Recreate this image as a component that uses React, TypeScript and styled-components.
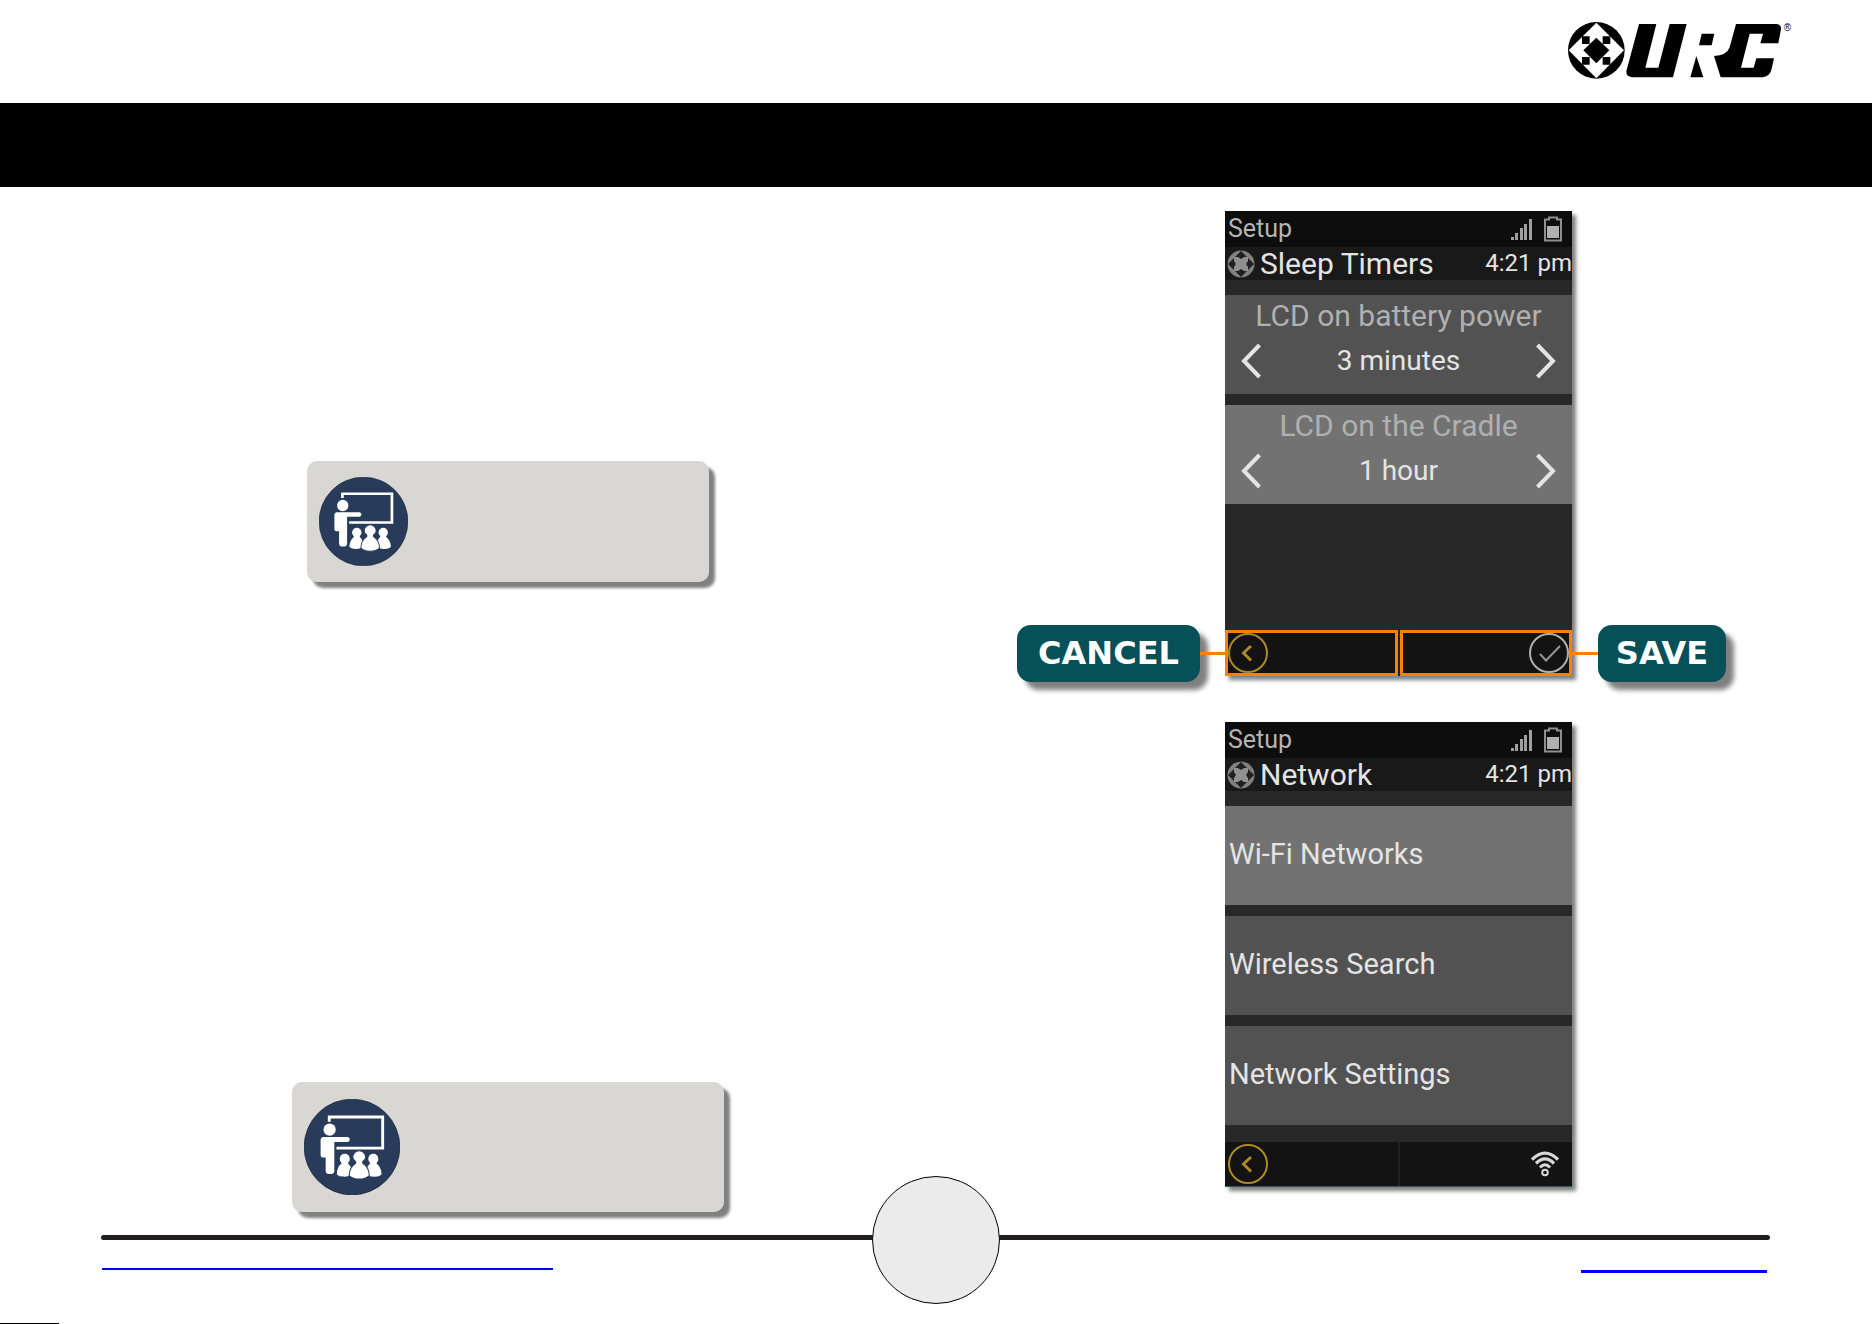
import React from "react";
import styled, { createGlobalStyle } from "styled-components";

const GlobalStyle = createGlobalStyle`
  *, *::before, *::after { box-sizing: border-box; }
  body { margin: 0; background: #fff; }
  button { margin: 0; padding: 0; border: 0; background: none; font: inherit; color: inherit; cursor: pointer; }
  svg { display: block; flex: none; }
`;

const ORANGE = "#ff8000";

const Page = styled.div`
  display: flex;
  flex-direction: column;
  min-height: 100vh;
  overflow-x: hidden;
  font-family: Roboto, "Liberation Sans", sans-serif;
`;

const Header = styled.header`
  display: flex;
  justify-content: flex-end;
  padding: 20px 80px 23px;
`;

const Banner = styled.div`
  height: 84px;
  background: #000;
`;

const Main = styled.main`
  display: grid;
  grid-template-columns: 1017fr 855fr;
  padding-bottom: 23px;
`;

const Notes = styled.section`
  display: flex;
  flex-direction: column;
  align-items: center;
  gap: 500px;
  padding: 274px 2px 0 0;
`;

const Note = styled.aside<{ $large?: boolean }>`
  display: flex;
  align-items: center;
  width: ${(p) => (p.$large ? 432 : 402)}px;
  height: ${(p) => (p.$large ? 130 : 121)}px;
  padding-left: 12px;
  border-radius: 10px;
  background: #d8d7d3;
  box-shadow: 6px 6px 3px #808080;
`;

const Figures = styled.section`
  display: flex;
  flex-direction: column;
  gap: 46px;
  padding-top: 24px;
`;

const Figure = styled.div`
  display: grid;
  grid-template-columns: 208px 347px 154px;
  align-items: end;
`;

const Callout = styled.div`
  display: flex;
  align-items: center;
  margin-bottom: -6px;
`;

const Tag = styled.span<{ $wide?: boolean }>`
  width: ${(p) => (p.$wide ? 183 : 128)}px;
  height: 57px;
  border-radius: 14px;
  background: #065058;
  box-shadow: 8px 8px 5px #808080;
  color: #fff;
  font: bold 32px/57px "DejaVu Sans", sans-serif;
  text-align: center;
`;

const Connector = styled.span`
  flex: 1;
  height: 3px;
  background: ${ORANGE};
`;

const Phone = styled.div`
  grid-column: 2;
  display: flex;
  flex-direction: column;
  height: 465px;
  background: #282828;
  box-shadow: 4px 4px 4px rgba(0, 0, 0, 0.5);
  color: #e4e4e4;
`;

const StatusBar = styled.div`
  display: flex;
  align-items: center;
  gap: 12px;
  height: 36px;
  padding: 0 10px 0 3px;
  background: #0d0d0d;
  color: #b4b4b4;
  font-size: 25px;
  line-height: 36px;
`;

const StatusText = styled.span`
  margin-right: auto;
`;

const TitleBar = styled.div`
  display: flex;
  align-items: center;
  gap: 5px;
  height: 33px;
  padding-left: 2px;
  background: #191919;
`;

const Title = styled.h2`
  flex: 1;
  margin: 0;
  font-size: 30px;
  font-weight: 400;
  line-height: 33px;
`;

const Clock = styled.time`
  font-size: 24px;
  line-height: 33px;
`;

const List = styled.div`
  display: flex;
  flex: 1;
  flex-direction: column;
  gap: 11px;
  padding-top: 15px;
`;

const Setting = styled.div<{ $active?: boolean }>`
  height: 99px;
  background: ${(p) => (p.$active ? "#727272" : "#525252")};
  text-align: center;
`;

const SettingName = styled.div`
  color: #b0b0b0;
  font-size: 30px;
  line-height: 42px;
`;

const SettingRow = styled.div`
  display: flex;
  align-items: center;
  justify-content: space-between;
  padding: 0 16px;
  font-size: 28px;
  line-height: 48px;
`;

const MenuItem = styled.button<{ $active?: boolean }>`
  height: 99px;
  padding: 0 4px 3px;
  background: ${(p) => (p.$active ? "#727272" : "#525252")};
  font-size: 29px;
  text-align: left;
`;

const SoftKeys = styled.div<{ $marked?: boolean }>`
  display: grid;
  grid-template-columns: 1fr 1fr;
  gap: 2px;
  height: ${(p) => (p.$marked ? 46 : 45)}px;
  border-bottom: ${(p) => (p.$marked ? "0" : "1px solid #2a5a70")};
  background: #222;
`;

const SoftKey = styled.button<{ $marked?: boolean; $right?: boolean; $inset?: number }>`
  display: flex;
  align-items: center;
  justify-content: ${(p) => (p.$right ? "flex-end" : "flex-start")};
  padding: 0 ${(p) => p.$inset ?? 0}px;
  border: ${(p) => (p.$marked ? `3px solid ${ORANGE}` : "0")};
  background: #131313;
`;

const Footer = styled.footer`
  position: relative;
  display: flex;
  flex: 1;
  flex-direction: column;
`;

const Rule = styled.div`
  height: 5px;
  margin: 0 102px 0 101px;
  border-radius: 3px;
  background: #231f20;
`;

const PageMark = styled.div`
  position: absolute;
  top: -59px;
  left: 50%;
  width: 128px;
  height: 128px;
  transform: translateX(-50%);
  border: 1px solid #000;
  border-radius: 50%;
  background: #ebebeb;
`;

const Links = styled.nav`
  display: flex;
  flex: 1;
  align-items: flex-start;
  justify-content: space-between;
  padding: 0 105px 0 102px;
`;

const FooterLink = styled.a<{ $wide?: boolean }>`
  width: ${(p) => (p.$wide ? 451 : 186)}px;
  height: ${(p) => (p.$wide ? 30 : 33)}px;
  border-bottom: ${(p) => (p.$wide ? 2 : 3)}px solid #00f;
`;

const CornerStrip = styled.div`
  width: 59px;
  height: 1px;
  background: #000;
`;

const UrcLogo = () => (
  <svg width="224" height="60" viewBox="54 60 672 180" role="img" aria-label="URC">
    <circle cx="139" cy="151" r="85" />
    <path d="M139 68 L222 151 L139 235 L56 151Z" fill="#fff" />
    <path d="M139 113 L178 151 L139 190 L100 151Z" />
    <path d="M96 109h23v23h-23zM158 109h23v23h-23zM96 171h23v23h-23zM158 171h23v23h-23z" />
    <path d="M267 72H319L286 203H325L359 72H410L369 232H246Q228 230 229 214Z" />
    <path d="M455 101H493L485 136H447Z" />
    <path d="M439 168L460 232H421Z" />
    <path d="M558 72H680Q694 74 693 88L685 130H631L639 101H599L573 203H611L619 175H672L664 210Q658 230 638 232H512L492 168Q530 167 539 142Z" />
    <text x="701" y="94" fontSize="30" fontFamily="Liberation Sans, sans-serif">®</text>
  </svg>
);

const PresenterIcon = ({ size }: { size: number }) => (
  <svg width={size} height={size} viewBox="87 81 266 266" aria-hidden="true">
    <circle cx="220" cy="214" r="132.5" fill="#293b5b" stroke="#17202f" strokeWidth="2" />
    <path d="M157 144V131H305V217H177" fill="none" stroke="#fff" strokeWidth="8" />
    <g fill="#fff">
      <circle cx="158" cy="166" r="17" />
      <path d="M140 186H208Q214 187 214 193T208 200H171V281Q170 289 159 289T147 281V243H139Q133 243 133 237V193Q134 187 140 186Z" />
      <circle cx="200" cy="247" r="14" />
      <path d="M191 255H209V260Q220 270 221 289Q211 297 197 296Q184 296 178 290Q178 270 191 260Z" />
      <circle cx="279" cy="247" r="14" />
      <path d="M270 255H288V260Q301 270 302 290Q294 297 281 296Q267 297 259 289Q259 270 270 260Z" />
    </g>
    <g fill="#fff" stroke="#293b5b" strokeWidth="3">
      <path d="M230 254Q222 250 222 242A18 18 0 0 1 258 242Q258 250 250 254V259Q267 270 268 293Q258 303 240 303T212 293Q213 270 230 259Z" />
    </g>
  </svg>
);

const DeviceIcon = () => (
  <svg width="28" height="28" viewBox="0 0 28 28" aria-hidden="true">
    <circle cx="14" cy="14" r="13.500" fill="#808080" />
    <path d="M14 1L27 14L14 27L1 14Z" fill="#202020" />
    <path d="M7 7h4l3 2 3-2h4v4l-2 3 2 3v4h-4l-3-2-3 2H7v-4l2-3-2-3Z" fill="#909090" />
  </svg>
);

const SignalIcon = () => (
  <svg width="21" height="21" viewBox="0 0 21 21" fill="#a0a0a0" aria-hidden="true">
    <path d="M0 18h3v3H0zM4 14h3v7H4zM9 9h3v12H9zM13 5h3v16h-3zM18 0h3v21h-3z" />
  </svg>
);

const BatteryIcon = () => (
  <svg width="18" height="26" viewBox="0 0 18 26" aria-hidden="true">
    <path d="M1 3.500H5V1.500H13V3.500H17V24.500H1Z" fill="none" stroke="#909090" strokeWidth="2" />
    <path d="M3 10h12v12H3z" fill="#b0b0b0" />
  </svg>
);

const Arrow = ({ right }: { right?: boolean }) => (
  <svg width="20" height="36" viewBox="0 0 20 36" fill="none" stroke="#e4e4e4" strokeWidth="4" aria-hidden="true">
    <path d={right ? "M1.500 2L17 18L1.500 34" : "M18.500 2L3 18L18.500 34"} />
  </svg>
);

const BackIcon = () => (
  <svg width="40" height="40" viewBox="0 0 40 40" fill="none" stroke="#ab8b25" aria-hidden="true">
    <circle cx="20" cy="20" r="19" strokeWidth="2" />
    <path d="M23 13L15.500 20L23 27.500" strokeWidth="3" />
  </svg>
);

const CheckIcon = () => (
  <svg width="40" height="40" viewBox="0 0 40 40" fill="none" stroke="#b0b0b0" strokeWidth="2" aria-hidden="true">
    <circle cx="20" cy="20" r="19" />
    <path d="M11 21L17 27.500L31 13" stroke="#969696" />
  </svg>
);

const WifiIcon = () => (
  <svg width="28" height="26" viewBox="0 0 28 26" fill="none" stroke="#d8d8d8" strokeWidth="3.200" aria-hidden="true">
    <path d="M1 8.500Q14 -4.500 27 8.500M5 12.500Q14 3.500 23 12.500M9 16.500Q14 11 19 16.500" />
    <circle cx="14" cy="21.500" r="2.800" strokeWidth="2" />
  </svg>
);

const PhoneTop = ({ title }: { title: string }) => (
  <>
    <StatusBar>
      <StatusText>Setup</StatusText>
      <SignalIcon />
      <BatteryIcon />
    </StatusBar>
    <TitleBar>
      <DeviceIcon />
      <Title>{title}</Title>
      <Clock>4:21 pm</Clock>
    </TitleBar>
  </>
);

const timers = [
  { name: "LCD on battery power", value: "3 minutes", active: false },
  { name: "LCD on the Cradle", value: "1 hour", active: true },
];

const menu = ["Wi-Fi Networks", "Wireless Search", "Network Settings"];

export default function App() {
  return (
    <Page>
      <GlobalStyle />
      <Header>
        <UrcLogo />
      </Header>
      <Banner />
      <Main>
        <Notes>
          <Note>
            <PresenterIcon size={89} />
          </Note>
          <Note $large>
            <PresenterIcon size={96} />
          </Note>
        </Notes>
        <Figures>
          <Figure>
            <Callout>
              <Tag $wide>CANCEL</Tag>
              <Connector />
            </Callout>
            <Phone>
              <PhoneTop title="Sleep Timers" />
              <List>
                {timers.map((t) => (
                  <Setting key={t.name} $active={t.active}>
                    <SettingName>{t.name}</SettingName>
                    <SettingRow>
                      <button aria-label="Previous">
                        <Arrow />
                      </button>
                      <span>{t.value}</span>
                      <button aria-label="Next">
                        <Arrow right />
                      </button>
                    </SettingRow>
                  </Setting>
                ))}
              </List>
              <SoftKeys $marked>
                <SoftKey $marked aria-label="Cancel">
                  <BackIcon />
                </SoftKey>
                <SoftKey $marked $right aria-label="Save">
                  <CheckIcon />
                </SoftKey>
              </SoftKeys>
            </Phone>
            <Callout>
              <Connector />
              <Tag>SAVE</Tag>
            </Callout>
          </Figure>
          <Figure>
            <Phone>
              <PhoneTop title="Network" />
              <List>
                {menu.map((label, i) => (
                  <MenuItem key={label} $active={i === 0}>
                    {label}
                  </MenuItem>
                ))}
              </List>
              <SoftKeys>
                <SoftKey $inset={3} aria-label="Back">
                  <BackIcon />
                </SoftKey>
                <SoftKey $right $inset={13} aria-label="Wi-Fi">
                  <WifiIcon />
                </SoftKey>
              </SoftKeys>
            </Phone>
          </Figure>
        </Figures>
      </Main>
      <Footer>
        <Rule />
        <PageMark />
        <Links>
          <FooterLink $wide href="#support" aria-label="Support" />
          <FooterLink href="#home" aria-label="Home" />
        </Links>
        <CornerStrip />
      </Footer>
    </Page>
  );
}
